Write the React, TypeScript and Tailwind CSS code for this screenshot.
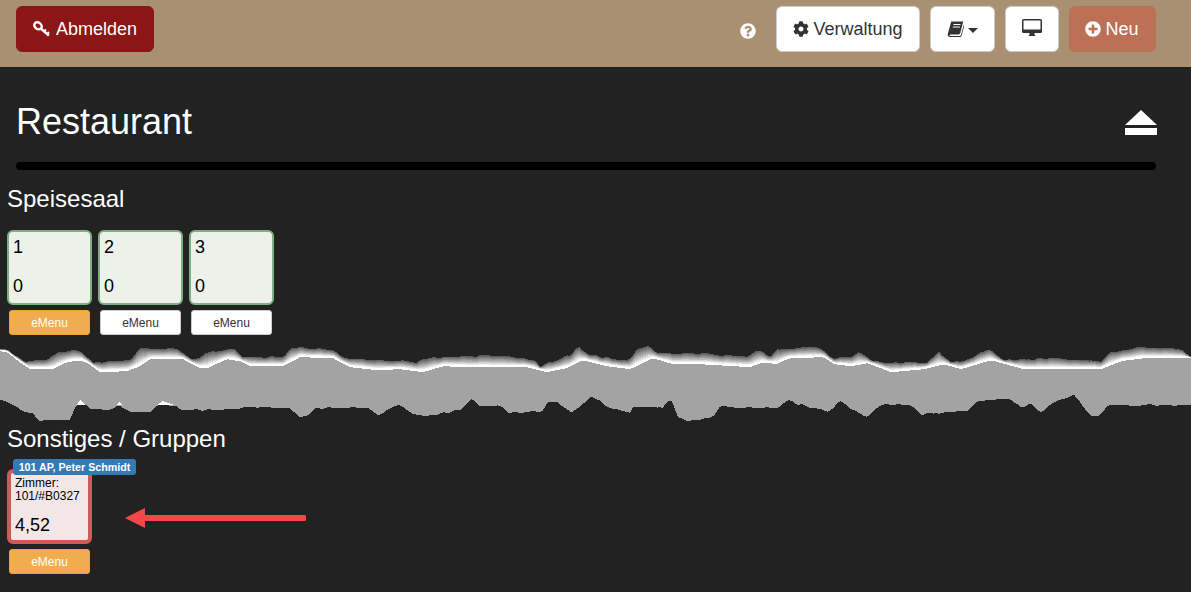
import React, { FC, ReactNode } from "react";
import { FaCog, FaPlusCircle, FaQuestionCircle } from "react-icons/fa";

type Pt = [number, number];

// traced from the torn-paper band, page coordinates
const shadowEdge: Pt[] = [
  [0, 350], [7, 350], [25, 362], [47, 360], [58, 352], [80, 350], [87, 357], [93, 363], [130, 360], [140, 348],
  [177, 349], [193, 360], [210, 352], [233, 348], [243, 357], [283, 357], [293, 347], [333, 350], [343, 358],
  [400, 361], [417, 362], [428, 358], [500, 355], [533, 360], [540, 366], [557, 360], [570, 355], [578, 347],
  [590, 355], [627, 361], [637, 350], [648, 346], [658, 353], [693, 353], [733, 356], [747, 357], [758, 349],
  [770, 358], [777, 350], [791, 348], [811, 347], [821, 349], [833, 358], [851, 357], [859, 352], [871, 360],
  [888, 363], [928, 362], [939, 352], [951, 362], [968, 360], [988, 349], [1004, 360], [1058, 358], [1101, 362],
  [1108, 353], [1141, 347], [1181, 349], [1191, 357],
];
const creaseEdge: Pt[] = [
  [0, 350], [7, 351], [20, 361], [30, 368], [53, 368], [67, 361], [80, 359], [88, 362], [100, 371], [127, 370],
  [140, 365], [150, 358], [183, 358], [200, 367], [207, 367], [227, 358], [240, 360], [250, 365], [283, 365],
  [300, 356], [333, 357], [350, 366], [377, 369], [400, 368], [423, 371], [443, 365], [467, 366], [527, 366],
  [547, 371], [567, 367], [583, 359], [607, 365], [630, 368], [653, 357], [673, 363], [700, 363], [750, 366],
  [763, 361], [777, 363], [787, 358], [791, 357], [824, 356], [834, 363], [851, 365], [868, 362], [891, 371],
  [924, 368], [944, 363], [961, 368], [991, 359], [1024, 368], [1101, 368], [1121, 360], [1144, 357], [1191, 357],
];
const bottomEdge: Pt[] = [
  [0, 400], [10, 403], [23, 412], [33, 413], [38, 420], [70, 420], [75, 408], [78, 405], [87, 405], [90, 409],
  [113, 410], [118, 405], [133, 412], [150, 412], [158, 405], [175, 405], [180, 410], [227, 410], [250, 407],
  [290, 408], [300, 417], [310, 415], [315, 408], [367, 408], [378, 415], [400, 404], [413, 414], [428, 416],
  [460, 410], [472, 399], [482, 407], [498, 405], [510, 413], [543, 411], [548, 402], [557, 402], [572, 413],
  [590, 397], [600, 400], [610, 409], [630, 412], [633, 408], [663, 407], [667, 401], [672, 402], [678, 418],
  [687, 421], [713, 417], [720, 407], [777, 408], [790, 399], [800, 408], [801, 404], [811, 408], [828, 411],
  [833, 408], [839, 401], [866, 417], [881, 405], [911, 405], [921, 414], [968, 411], [976, 401], [1011, 399],
  [1021, 408], [1031, 403], [1041, 413], [1054, 402], [1074, 395], [1091, 416], [1099, 416], [1109, 405], [1191, 405],
];

const sample = (edge: Pt[], x: number) => {
  for (let i = 1; i < edge.length; i++) {
    if (x <= edge[i][0]) {
      const [x0, y0] = edge[i - 1];
      const [x1, y1] = edge[i];
      return y0 + ((y1 - y0) * (x - x0)) / (x1 - x0 || 1);
    }
  }
  return edge[edge.length - 1][1];
};

const xs = Array.from({ length: 398 }, (_, i) => Math.min(i * 3, 1191));
// low, slow jitter so the torn edges stay jagged without looking striped
const noise = (i: number) => {
  const k = Math.floor(i / 2);
  return ((k * 7919 + (k * k) % 97) % 5) * 0.35 - 0.7;
};

const top = xs.map((x, i) => sample(shadowEdge, x) + noise(i));
const crease = xs.map((x) => sample(creaseEdge, x));
const bottom = xs.map((x, i) => sample(bottomEdge, x) + noise(i + 31));

const bottomPath = xs.map((x, i) => `${x},${bottom[i] - 340}`).reverse().join(" ");
const layer = (t: number, shift = 0) =>
  xs.map((x, i) => `${x},${Math.min(top[i] + (crease[i] - top[i]) * t, crease[i]) + shift - 340}`).join(" ") + " " + bottomPath;

const shades = [
  "#5c5c5c", "#686868", "#747474", "#808080", "#8c8c8c", "#989898",
  "#a4a4a4", "#b0b0b0", "#bcbcbc", "#cbcbcb", "#dadada", "#e9e9e9", "#f6f6f6", "#ffffff",
];

const TornBand: FC = () => (
  <svg className="block w-full h-[85px]" viewBox="0 0 1191 85" shapeRendering="crispEdges">
    {shades.map((shade, i) => (
      <polygon key={i} points={layer(i / 14)} fill={shade} />
    ))}
    <polygon points={layer(1, 1.2)} fill="#a3a3a3" />
    <polygon points="77,65 80,60 85,65" fill="#ffffff" />
    <polygon points="117,65 119,62 122,65" fill="#ffffff" />
    <polygon points="157,65 163,61 174,65" fill="#ffffff" />
  </svg>
);

const KeyIcon: FC = () => (
  <svg className="w-[17px] h-[16px]" viewBox="0 0 17 16" fill="none" stroke="#fff">
    <ellipse cx="5" cy="4.8" rx="4" ry="3.2" strokeWidth="2.4" transform="rotate(40 5 4.8)" />
    <path d="M8 7.6 15.8 14.6" strokeWidth="2.6" />
    <path d="M11 10.6 12.9 8.5M14 13.2 16 11" strokeWidth="2" />
  </svg>
);

const BookIcon: FC = () => (
  <svg className="w-[17px] h-[16px]" viewBox="0 0 17 16">
    <path d="M4.2 0.5H16.2L13.3 11.8c-.3 1-.9 1.6-2 1.6H3.4c-.8 0-1.2.7-.9 1.1.2.3.6.4 1 .4h9.3c.6 0 1-.3 1.2-.9l2.8-10.2.6.4-2.8 10.5c-.2.8-.9 1.3-1.8 1.3H3.2C1.6 16 .3 14.8.8 13L4.2 0.5z" fill="#333" />
    <path d="M6.5 3.5h7M5.9 6h7" stroke="#fff" strokeWidth="1" />
  </svg>
);

const DesktopIcon: FC = () => (
  <svg className="w-[20px] h-[17px] -mt-[3px]" viewBox="0 0 20 17">
    <rect width="20" height="14" rx="1.5" fill="#333" />
    <rect x="1.5" y="1.5" width="17" height="9" fill="#fff" />
    <path d="M7.5 14h5v1.5l1 1.5h-7l1-1.5z" fill="#333" />
  </svg>
);

const EjectIcon: FC = () => (
  <svg className="w-[32px] h-[25px] -mr-[1px]" viewBox="0 0 32 25" fill="#fff">
    <path d="M16 0 32 15H0Z" />
    <rect y="18" width="32" height="7" />
  </svg>
);

const Button: FC<{ className: string; children: ReactNode }> = ({ className, children }) => (
  <button className={`h-[46px] rounded-[6px] border flex items-center justify-center text-[18px] ${className}`}>{children}</button>
);

const EMenu: FC<{ active?: boolean }> = ({ active }) => (
  <button
    className={`mt-[5px] ml-[2px] w-[81px] h-[25px] rounded-[3px] border text-[12px] ${
      active ? "bg-[#f0ad4e] border-[#eea236] text-white" : "bg-white border-[#cccccc] text-[#333333]"
    }`}
  >
    eMenu
  </button>
);

const Table: FC<{ nr: string; active?: boolean }> = ({ nr, active }) => (
  <div className="w-[85px]">
    <div className="h-[75px] rounded-[6px] border-2 border-[#7cb082] bg-[#edf1ea] pl-[4px] pt-[5px] pb-[7px] flex flex-col justify-between text-[18px] leading-[20px] text-black">
      <span>{nr}</span>
      <span>0</span>
    </div>
    <EMenu active={active} />
  </div>
);

const App: FC = () => {
  return (
    <div className="h-[592px] overflow-hidden bg-[#222222] text-white font-['Liberation_Sans',Arial,sans-serif]">
      <header className="h-[67px] bg-[#a89070] flex items-start justify-between pl-4 pr-[35px] pt-[6px]">
        <Button className="w-[138px] gap-[6px] bg-[#8c1515] border-[#8c1515] text-white">
          <KeyIcon />
          Abmelden
        </Button>
        <div className="flex items-center">
          <FaQuestionCircle className="w-[16px] h-[16px] text-white mr-[20px] mt-[4px]" />
          <Button className="w-[144px] gap-[4px] bg-white border-[#cccccc] text-[#333333] mr-[10px]">
            <FaCog className="w-[16px] h-[16px]" />
            Verwaltung
          </Button>
          <Button className="w-[65px] gap-[4px] bg-white border-[#cccccc] text-[#333333] mr-[10px]">
            <BookIcon />
            <span className="border-x-[5px] border-x-transparent border-t-[5px] border-t-[#333333] mt-[2px]" />
          </Button>
          <Button className="w-[54px] bg-white border-[#cccccc] text-[#333333] mr-[10px]">
            <DesktopIcon />
          </Button>
          <Button className="w-[87px] gap-[4px] bg-[#bc7055] border-[#bc7055] text-white">
            <FaPlusCircle className="w-[16px] h-[16px] -ml-[1px]" />
            Neu
          </Button>
        </div>
      </header>

      <div className="pl-4 pr-[35px] pt-[35px]">
        <div className="flex items-center justify-between h-[40px]">
          <h1 className="text-[36px] leading-[40px]">Restaurant</h1>
          <EjectIcon />
        </div>
        <div className="h-2 mt-[20px] rounded-full bg-black" />
      </div>

      <section className="pl-[7px] pt-[16px]">
        <h3 className="text-[24px] leading-[26px]">Speisesaal</h3>
        <div className="flex gap-[6px] mt-[18px]">
          <Table nr="1" active />
          <Table nr="2" />
          <Table nr="3" />
        </div>
      </section>

      <div className="mt-[5px]">
        <TornBand />
      </div>

      <section className="pl-[7px] pt-[1px]">
        <h3 className="text-[24px] leading-[26px]">Sonstiges / Gruppen</h3>
        <div className="flex mt-[17px]">
          <div className="relative w-[85px]">
            <span className="absolute left-[6px] -top-[10px] h-[16px] w-[123px] rounded-[3px] bg-[#337ab7] text-[10.7px] leading-[16px] font-bold text-white text-center whitespace-nowrap">
              101 AP, Peter Schmidt
            </span>
            <div className="h-[75px] rounded-[6px] border-[4px] border-[#d2595a] bg-[#f2e6e6] pl-[4px] pt-[4px] text-black">
              <p className="text-[12px] leading-[13px]">
                Zimmer:
                <br />
                101/#B0327
              </p>
              <p className="text-[18px] leading-[20px] mt-[12px]">4,52</p>
            </div>
            <EMenu active />
          </div>
          <svg className="w-[184px] h-[24px] ml-[30px] mt-[37px]" viewBox="0 0 184 24">
            <path d="M18 12H182" stroke="#f44848" strokeWidth="6" strokeLinecap="round" />
            <path d="M3 12 23 2V22Z" fill="#f44848" />
          </svg>
        </div>
      </section>
    </div>
  );
};

export default App;
